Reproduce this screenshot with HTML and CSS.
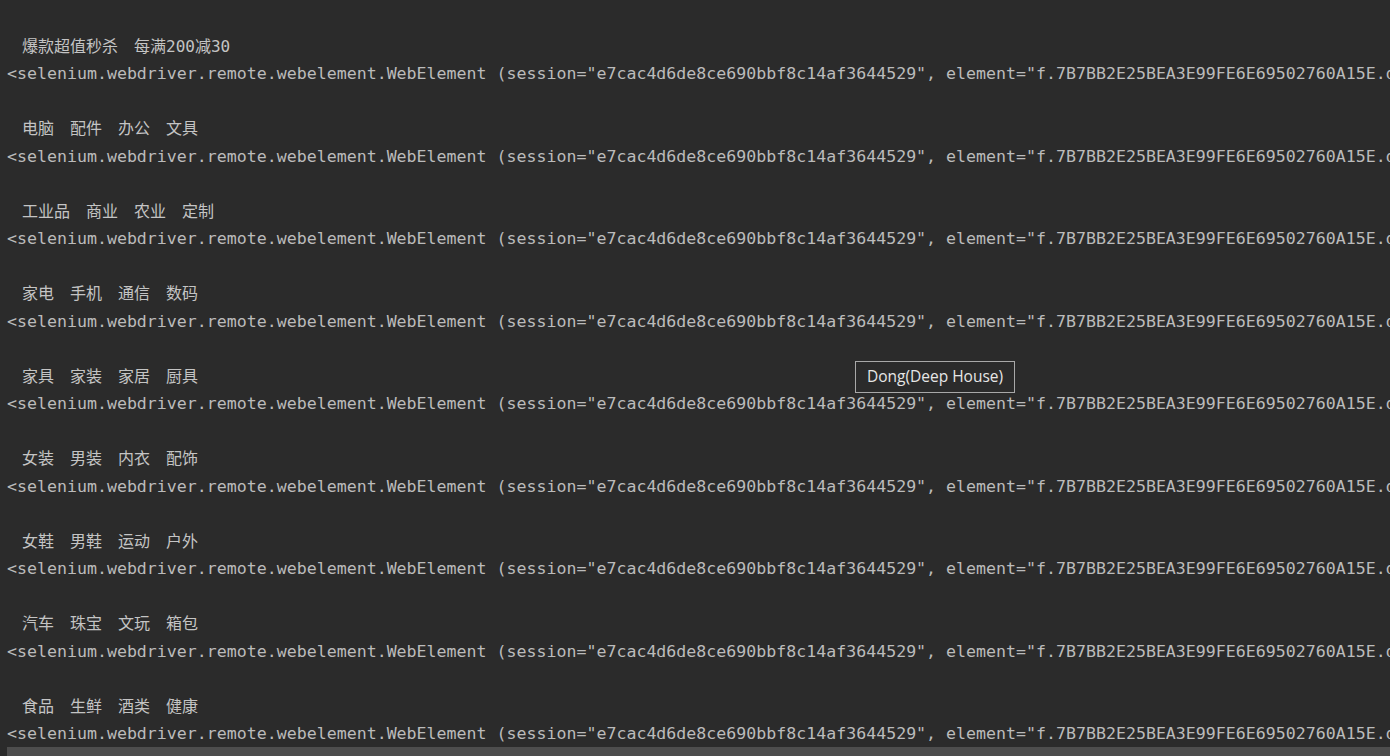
FILE: index.html
```html
<!DOCTYPE html>
<html>
<head>
<meta charset="utf-8">
<link rel="stylesheet" href="styles.css">
</head>
<body>
<div class="console">
  <div class="line"></div>
  <div class="line cn"><span>爆款超值秒杀</span><span>每满200减30</span></div>
  <div class="line el">&lt;selenium.webdriver.remote.webelement.WebElement (session="e7cac4d6de8ce690bbf8c14af3644529", element="f.7B7BB2E25BEA3E99FE6E69502760A15E.d0.11")&gt;</div>
  <div class="line"></div>
  <div class="line cn"><span>电脑</span><span>配件</span><span>办公</span><span>文具</span></div>
  <div class="line el">&lt;selenium.webdriver.remote.webelement.WebElement (session="e7cac4d6de8ce690bbf8c14af3644529", element="f.7B7BB2E25BEA3E99FE6E69502760A15E.d0.12")&gt;</div>
  <div class="line"></div>
  <div class="line cn"><span>工业品</span><span>商业</span><span>农业</span><span>定制</span></div>
  <div class="line el">&lt;selenium.webdriver.remote.webelement.WebElement (session="e7cac4d6de8ce690bbf8c14af3644529", element="f.7B7BB2E25BEA3E99FE6E69502760A15E.d0.13")&gt;</div>
  <div class="line"></div>
  <div class="line cn"><span>家电</span><span>手机</span><span>通信</span><span>数码</span></div>
  <div class="line el">&lt;selenium.webdriver.remote.webelement.WebElement (session="e7cac4d6de8ce690bbf8c14af3644529", element="f.7B7BB2E25BEA3E99FE6E69502760A15E.d0.14")&gt;</div>
  <div class="line"></div>
  <div class="line cn"><span>家具</span><span>家装</span><span>家居</span><span>厨具</span></div>
  <div class="line el">&lt;selenium.webdriver.remote.webelement.WebElement (session="e7cac4d6de8ce690bbf8c14af3644529", element="f.7B7BB2E25BEA3E99FE6E69502760A15E.d0.15")&gt;</div>
  <div class="line"></div>
  <div class="line cn"><span>女装</span><span>男装</span><span>内衣</span><span>配饰</span></div>
  <div class="line el">&lt;selenium.webdriver.remote.webelement.WebElement (session="e7cac4d6de8ce690bbf8c14af3644529", element="f.7B7BB2E25BEA3E99FE6E69502760A15E.d0.16")&gt;</div>
  <div class="line"></div>
  <div class="line cn"><span>女鞋</span><span>男鞋</span><span>运动</span><span>户外</span></div>
  <div class="line el">&lt;selenium.webdriver.remote.webelement.WebElement (session="e7cac4d6de8ce690bbf8c14af3644529", element="f.7B7BB2E25BEA3E99FE6E69502760A15E.d0.17")&gt;</div>
  <div class="line"></div>
  <div class="line cn"><span>汽车</span><span>珠宝</span><span>文玩</span><span>箱包</span></div>
  <div class="line el">&lt;selenium.webdriver.remote.webelement.WebElement (session="e7cac4d6de8ce690bbf8c14af3644529", element="f.7B7BB2E25BEA3E99FE6E69502760A15E.d0.18")&gt;</div>
  <div class="line"></div>
  <div class="line cn"><span>食品</span><span>生鲜</span><span>酒类</span><span>健康</span></div>
  <div class="line el">&lt;selenium.webdriver.remote.webelement.WebElement (session="e7cac4d6de8ce690bbf8c14af3644529", element="f.7B7BB2E25BEA3E99FE6E69502760A15E.d0.19")&gt;</div>
</div>
<div class="tooltip">Dong(Deep House)</div>
<div class="hscroll"></div>
</body>
</html>
```
FILE: styles.css
```css
html, body {
  margin: 0;
  padding: 0;
  background: #2b2b2b;
  width: 1390px;
  height: 756px;
  overflow: hidden;
}
body {
  position: relative;
}
.console {
  padding: 5px 0 0 7px;
  font-family: "DejaVu Sans Mono", "Noto Sans CJK SC", monospace;
  font-size: 16.6px;
  color: #bbbbbb;
  width: 1383px;
  overflow: hidden;
}
.line {
  height: 27.5px;
  line-height: 27.5px;
}
.cn {
  display: flex;
  gap: 16px;
  padding-left: 15px;
  font-family: "DejaVu Sans Mono", "Noto Sans CJK SC", monospace;
  font-size: 16px;
  color: #c4c4c4;
}
.el {
  white-space: pre;
  color: #bbbbbb;
}
.tooltip {
  position: absolute;
  left: 855px;
  top: 361px;
  width: 160px;
  height: 32px;
  box-sizing: border-box;
  border: 1px solid #a8a8a8;
  background: #2b2b2b;
  color: #e6e6e6;
  font-family: "Open Sans", "Noto Sans", sans-serif;
  font-size: 15.5px;
  line-height: 29px;
  text-align: center;
}
.hscroll {
  position: absolute;
  left: 7px;
  right: 0;
  bottom: 0;
  height: 9px;
  background: #4d4d4d;
}
```
